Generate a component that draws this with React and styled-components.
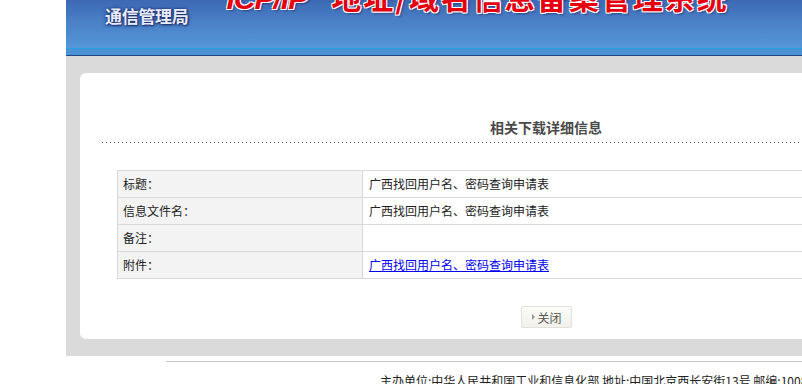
import React from 'react';
import styled, { createGlobalStyle } from 'styled-components';

const GlobalStyle = createGlobalStyle`
  html, body {
    margin: 0;
    padding: 0;
    background: #fff;
    overflow: hidden;
  }
  body {
    font-family: "Liberation Sans", "Noto Sans CJK SC", sans-serif;
    font-size: 12px;
    color: #333;
  }
`;

const rows = [
  { label: '标题：', value: '广西找回用户名、密码查询申请表' },
  { label: '信息文件名：', value: '广西找回用户名、密码查询申请表' },
  { label: '备注：', value: '' },
  { label: '附件：', value: '广西找回用户名、密码查询申请表', link: true },
];

const App = () => {
  return (
    <>
      <GlobalStyle />
      <Page>
        <Header>
          <Banner>
            <Org>通信管理局</Org>
            <SystemTitle>
              <em>ICP/IP</em>
              <span>地址/域名信息备案管理系统</span>
            </SystemTitle>
          </Banner>
          <Strip />
        </Header>

        <Main>
          <Card>
            <Heading>相关下载详细信息</Heading>
            <Dots />
            <InfoTable>
              <tbody>
                {rows.map((row, i) => (
                  <tr key={i}>
                    <LabelCell>{row.label}</LabelCell>
                    <ValueCell>
                      {row.link ? <a href="#">{row.value}</a> : row.value}
                    </ValueCell>
                  </tr>
                ))}
              </tbody>
            </InfoTable>
            <Actions>
              <CloseButton type="button">
                <Arrow />
                关闭
              </CloseButton>
            </Actions>
          </Card>
        </Main>

        <Footer>
          主办单位:中华人民共和国工业和信息化部 地址:中国北京西长安街13号 邮编:100804
        </Footer>
      </Page>
    </>
  );
};

const Page = styled.div`
  width: 960px;
  margin-left: 66px;
`;

const Header = styled.div`
  display: flex;
  flex-direction: column;
`;

const Banner = styled.div`
  height: 48px;
  display: flex;
  align-items: flex-start;
  overflow: hidden;
  background: linear-gradient(to bottom, #3d68b4 0%, #4a80c6 45%, #5597d8 100%);
`;

const Org = styled.div`
  margin: 7px 0 0 39px;
  font-family: "Noto Sans CJK SC", sans-serif;
  font-size: 17px;
  line-height: 17px;
  font-weight: bold;
  letter-spacing: -0.3px;
  color: #e9ecfa;
  text-shadow: 0 0 2px #1c2f6e, 1px 1px 2px #1c2f6e, 0 0 4px #2a3f80;
`;

const SystemTitle = styled.div`
  margin: -19px 0 0 38px;
  display: flex;
  align-items: baseline;
  font-size: 30px;
  line-height: 30px;
  font-weight: bold;
  color: #e4000f;
  white-space: nowrap;
  text-shadow:
    -1px -1px 0 #fff, 1px -1px 0 #fff, -1px 1px 0 #fff, 1px 1px 0 #fff,
    2px 2px 2px rgba(30, 40, 90, 0.6);

  em {
    font-family: "Liberation Sans", sans-serif;
    font-style: italic;
    letter-spacing: -1px;
  }

  span {
    margin-left: 24px;
    font-family: "Noto Sans CJK SC", sans-serif;
    letter-spacing: 2px;
  }
`;

const Strip = styled.div`
  height: 6px;
  background: #4d92d4;
  border-top: 1px solid #22a3e2;
  border-bottom: 1px solid #1b4a88;
`;

const Main = styled.div`
  background: #dadada;
  padding: 17px 14px 17px 14px;
`;

const Card = styled.div`
  background: #fff;
  border-radius: 6px;
  padding: 45px 22px 11px;
  display: flex;
  flex-direction: column;
`;

const Heading = styled.h2`
  margin: 0;
  text-align: center;
  font-family: "Noto Sans CJK SC", sans-serif;
  font-size: 14px;
  line-height: 18px;
  font-weight: bold;
  color: #4a4a4a;
  padding-bottom: 6px;
`;

const Dots = styled.div`
  height: 1px;
  background: repeating-linear-gradient(to right, #555 0 1px, transparent 1px 4px);
`;

const InfoTable = styled.table`
  margin: 27px 15px 0;
  border-collapse: collapse;
  width: calc(100% - 30px);
  font-family: "Noto Sans CJK SC", sans-serif;
  font-size: 12px;

  td {
    border: 1px solid #d9d9d9;
    height: 26px;
    padding: 0;
    line-height: 16px;
    color: #222;
  }

  a {
    color: #0000ee;
    text-decoration: underline;
  }
`;

const LabelCell = styled.td`
  width: 239px;
  background: #f3f3f3;
  padding-left: 5px !important;
`;

const ValueCell = styled.td`
  background: #fff;
  padding-left: 6px !important;
`;

const Actions = styled.div`
  display: flex;
  justify-content: center;
  margin-top: 27px;
`;

const CloseButton = styled.button`
  width: 51px;
  height: 22px;
  display: flex;
  align-items: center;
  justify-content: center;
  gap: 2px;
  padding: 0 0 0 2px;
  border: 1px solid #e2e2dc;
  border-radius: 2px;
  background: linear-gradient(to bottom, #fbfbf8, #f1f1ea);
  font-family: "Noto Sans CJK SC", sans-serif;
  font-size: 12px;
  color: #555;
  cursor: pointer;
`;

const Arrow = styled.span`
  width: 0;
  height: 0;
  border-top: 3px solid transparent;
  border-bottom: 3px solid transparent;
  border-left: 3px solid #999;
`;

const Footer = styled.div`
  margin: 5px 0 0 100px;
  border-top: 1px solid #c8c8c8;
  padding: 11px 0 0 214px;
  font-family: "Noto Sans CJK SC", sans-serif;
  font-size: 12px;
  line-height: 16px;
  color: #222;
  white-space: nowrap;
`;

export default App;
